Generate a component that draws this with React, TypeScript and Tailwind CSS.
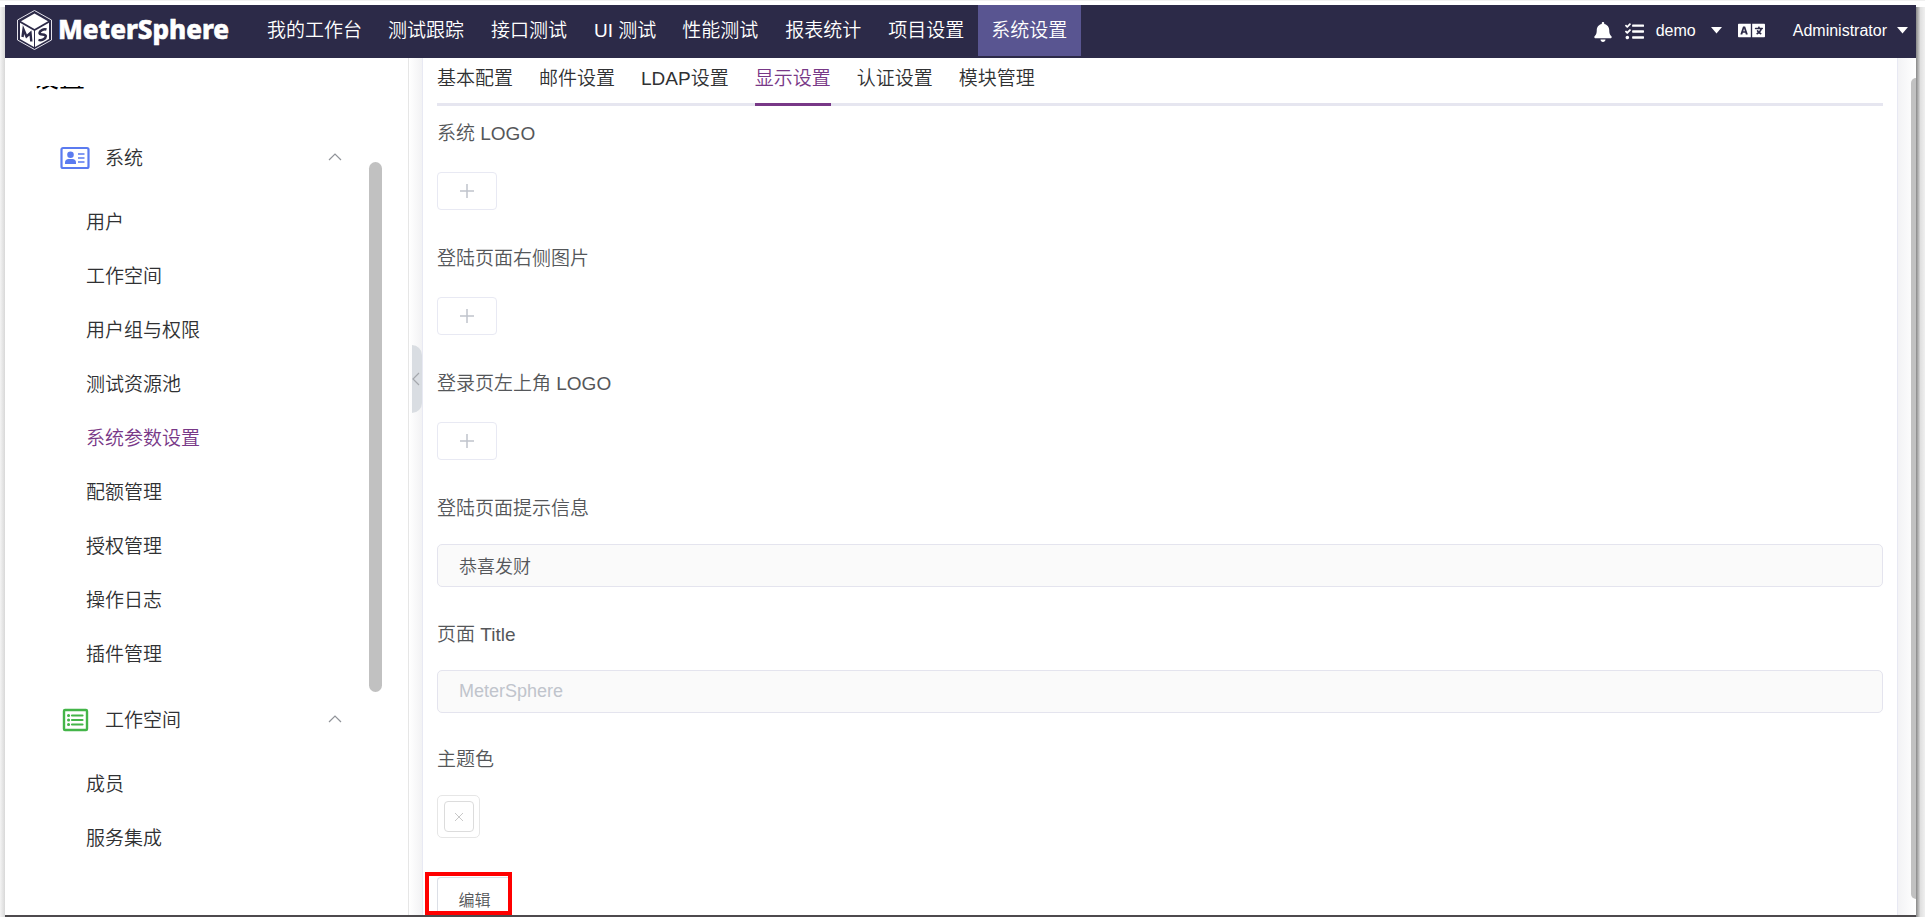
import React from "react";
import { FaBell, FaLanguage, FaTasks } from "react-icons/fa";

const navItems = ["我的工作台", "测试跟踪", "接口测试", "UI 测试", "性能测试", "报表统计", "项目设置", "系统设置"];
const tabs = ["基本配置", "邮件设置", "LDAP设置", "显示设置", "认证设置", "模块管理"];
const systemItems = ["用户", "工作空间", "用户组与权限", "测试资源池", "系统参数设置", "配额管理", "授权管理", "操作日志", "插件管理"];
const workspaceItems = ["成员", "服务集成"];
const uploads = ["系统 LOGO", "登陆页面右侧图片", "登录页左上角 LOGO"];

function Logo() {
  return (
    <svg viewBox="0 0 214 42" className="h-[42px] w-[214px] shrink-0" role="img" aria-label="MeterSphere">
      <path d="M17.500 1.500 34.500 11v20L17.500 40.500.500 31V11Z" fill="none" stroke="#e4e3ec" strokeWidth="1" />
      <path d="M17.500 4.500 31 12.200 17.500 20 4 12.200Z" fill="#fff" />
      <path d="M3 13.800 17 21.800V38L3 30Z" fill="#fff" />
      <path d="M32 13.800 18 21.800V38L32 30Z" fill="#fff" />
      <path d="M5.500 28 6.500 20.500l3 7 4-3.500.800 8.500" fill="none" stroke="#2c2a48" strokeWidth="2.400" />
      <path d="M29.500 20.500c-3-1-7 1.200-7 3.600 0 2.600 6.300.300 6.300 3.200 0 2.500-4 4.500-7.300 3.600" fill="none" stroke="#2c2a48" strokeWidth="2.500" />
      <text x="41" y="30" fill="#fff" stroke="#fff" strokeWidth="0.600" fontSize="26" fontWeight="800" fontFamily="'Noto Sans', sans-serif">MeterSphere</text>
    </svg>
  );
}

function Caret() {
  return (
    <svg viewBox="0 0 11 7" width="11" height="7" fill="currentColor" aria-hidden="true">
      <path d="M0 0h11L5.500 6.500Z" />
    </svg>
  );
}

function IdCard() {
  return (
    <svg viewBox="0 0 30 24" className="mb-0.5 h-6 w-[30px]" aria-hidden="true">
      <rect x="1.500" y="2" width="27" height="20" rx="1.500" fill="none" stroke="#5b7bf0" strokeWidth="2.200" />
      <circle cx="10.500" cy="8.800" r="3.300" fill="#5b7bf0" />
      <path d="M5 18v-1.500c0-2 1.500-3.500 3.500-3.500h4c2 0 3.500 1.500 3.500 3.500V18Z" fill="#5b7bf0" />
      <path d="M18 8h6.500M18 12h6.500M18 16h6.500" stroke="#5b7bf0" strokeWidth="1.500" />
    </svg>
  );
}

function ListBox() {
  return (
    <svg viewBox="0 0 30 24" className="mb-0.5 h-6 w-[30px]" aria-hidden="true">
      <rect x="4" y="2" width="23" height="20" rx="1" fill="none" stroke="#44b549" strokeWidth="2.400" />
      <path d="M12 7.500H22.500M12 12H22.500M12 16.500H22.500" stroke="#44b549" strokeWidth="2.200" strokeLinecap="round" />
      <path d="M8.500 7.500h.1M8.500 12h.1M8.500 16.500h.1" stroke="#44b549" strokeWidth="3" strokeLinecap="round" />
    </svg>
  );
}

function MenuGroup({ title, icon, items }: { title: string; icon: React.ReactNode; items: string[] }) {
  return (
    <section className="mb-0.5">
      <button type="button" className="flex h-[74px] w-full items-center pr-[66px] pl-[55px] text-left">
        {icon}
        <span className="ml-[15px] flex-1">{title}</span>
        <svg viewBox="0 0 14 8" className="mb-1 h-2 w-3.5 shrink-0" fill="none" stroke="#909399" strokeWidth="1.200" aria-hidden="true">
          <path d="M1 7 7 1l6 6" />
        </svg>
      </button>
      <ul>
        {items.map((item) => (
          <li key={item}>
            <a href="#" className={item === "系统参数设置" ? "flex h-[54px] items-center pl-[81px] text-[#783887]" : "flex h-[54px] items-center pl-[81px]"}>
              {item}
            </a>
          </li>
        ))}
      </ul>
    </section>
  );
}

export default function App() {
  return (
    <div className="flex h-screen flex-col overflow-hidden border-t border-[#f0f0f0] bg-white pb-[7px] font-['Liberation_Sans','Noto_Sans_CJK_SC',sans-serif] text-[19px] font-[350] text-[#303133]">
      <div className="mt-1 flex min-h-0 flex-1">
        <div className="mt-0.5 w-[5px] shrink-0 bg-linear-to-r from-[#f4f4f4] to-[#d8d8d8]" />
        <div className="flex min-w-0 flex-1 flex-col border-b-2 border-[#4d4a4d]">
          <header className="flex h-[53px] shrink-0 items-start bg-[#2c2a48] text-white">
            <div className="flex h-[50px] items-center pl-3">
              <Logo />
            </div>
            <nav className="ml-[23px] flex">
              {navItems.map((item) => (
                <a key={item} href="#" className={item === "系统设置" ? "flex h-[51px] min-w-[103px] items-center bg-[#595591] px-[13px] pt-0.5" : item === "UI 测试" ? "flex h-[51px] items-center px-[13px] pt-0.5" : "flex h-[51px] min-w-[103px] items-center px-[13px] pt-0.5"}>
                  {item}
                </a>
              ))}
            </nav>
            <div className="ml-auto flex h-[53px] items-center text-[16px]">
              <button type="button" aria-label="通知"><FaBell size={20} /></button>
              <button type="button" aria-label="任务" className="ml-3"><FaTasks size={19} /></button>
              <button type="button" className="ml-3 flex items-center gap-[15px] pb-0.5">demo<Caret /></button>
              <button type="button" aria-label="语言" className="ml-4 pb-0.5"><FaLanguage size={27} /></button>
              <button type="button" className="mr-2 ml-7 flex items-center gap-2.5 pb-0.5">Administrator<Caret /></button>
            </div>
          </header>
          <div className="flex min-h-0 flex-1">
            <aside className="flex w-[404px] shrink-0 flex-col border-r border-[#e6e6e6]">
              <div className="mt-7 flex h-[5px] shrink-0 items-end overflow-hidden pl-7 text-[26px] leading-[26px] font-normal text-black">设置</div>
              <div className="relative mt-[31px]">
                <MenuGroup title="系统" icon={<IdCard />} items={systemItems} />
                <MenuGroup title="工作空间" icon={<ListBox />} items={workspaceItems} />
                <div className="absolute top-10 right-[26px] h-[530px] w-[13px] rounded-full bg-[#c1c1c1]" />
              </div>
            </aside>
            <div className="flex w-[13px] shrink-0 items-center bg-linear-to-r from-white to-[#f2f2f4]">
              <button type="button" aria-label="收起" className="mb-[216px] ml-[3px] flex h-[68px] w-2.5 items-center rounded-r-[10px] bg-[#d9dde2]">
                <svg viewBox="0 0 8 14" width="8" height="14" fill="none" stroke="#a5a8ad" strokeWidth="1.200" aria-hidden="true"><path d="M7 1 1 7l6 6" /></svg>
              </button>
            </div>
            <main className="min-w-0 flex-1 overflow-hidden border-x border-[#e8e9f3] px-[14px]">
              <nav className="flex h-[48px] gap-[26px] border-b-3 border-[#e6e6f0]">
                {tabs.map((tab) => (
                  <a key={tab} href="#" className={tab === "显示设置" ? "h-[48px] border-b-3 border-[#783887] pt-[7px] text-[#783887]" : "h-[48px] pt-[7px]"}>
                    {tab}
                  </a>
                ))}
              </nav>
              <form className="pt-px text-[#55575a]">
                {uploads.map((label) => (
                  <div key={label} className="h-[125px]">
                    <label htmlFor={label} className="flex h-[54px] items-center">{label}</label>
                    <button id={label} type="button" className="mt-[11px] flex h-[38px] w-[60px] items-center justify-center rounded border border-[#e8e9f3]">
                      <svg viewBox="0 0 14 14" width="14" height="14" stroke="#c0c4cc" strokeWidth="1.500" aria-hidden="true"><path d="M0 7h14M7 0v14" /></svg>
                    </button>
                  </div>
                ))}
                <div className="h-[126px]">
                  <label htmlFor="tip" className="flex h-[54px] items-center">登陆页面提示信息</label>
                  <input id="tip" readOnly defaultValue="恭喜发财" className="mt-2 block h-[43px] w-full rounded-[5px] border border-[#e4e4ee] bg-[#fafafa] px-[21px] pb-0.5 text-[18px]" />
                </div>
                <div className="h-[125px]">
                  <label htmlFor="title" className="flex h-[54px] items-center">页面 Title</label>
                  <input id="title" readOnly placeholder="MeterSphere" className="mt-2 block h-[43px] w-full rounded-[5px] border border-[#e4e4ee] bg-[#fafafa] px-[21px] text-[18px] placeholder:text-[#c0c4cc]" />
                </div>
                <div className="h-[139px]">
                  <label htmlFor="theme" className="flex h-[54px] items-center">主题色</label>
                  <button id="theme" type="button" className="mt-2 flex h-[43px] w-[43px] items-center justify-center rounded-[5px] border border-[#e6e6e6]">
                    <span className="flex h-[31px] w-[30px] items-center justify-center rounded-sm border border-[#dcdcdc]">
                      <svg viewBox="0 0 8 8" width="8" height="8" stroke="#c8c8c8" aria-hidden="true"><path d="m0 0 8 8M8 0 0 8" /></svg>
                    </span>
                  </button>
                </div>
                <div className="relative -ml-3 h-[43px] w-[87px] pt-[5px] pl-3">
                  <button type="button" className="h-[46px] w-[75px] rounded-t border border-b-0 border-[#dcdfe6] text-[16px]">编辑</button>
                  <div className="pointer-events-none absolute inset-0 border-4 border-[#f00]" />
                </div>
              </form>
            </main>
            <div className="flex w-[18px] shrink-0 justify-end bg-linear-to-r from-[#f3f3f5] to-white">
              <div className="mt-5 mb-4 w-[5px] rounded-l-[5px] bg-[#c1c1c1]" />
            </div>
          </div>
        </div>
        <div className="mt-0.5 w-[9px] shrink-0 bg-linear-to-r from-[#888] via-[#e0e0e0] to-[#f0f0f0]" />
      </div>
    </div>
  );
}
